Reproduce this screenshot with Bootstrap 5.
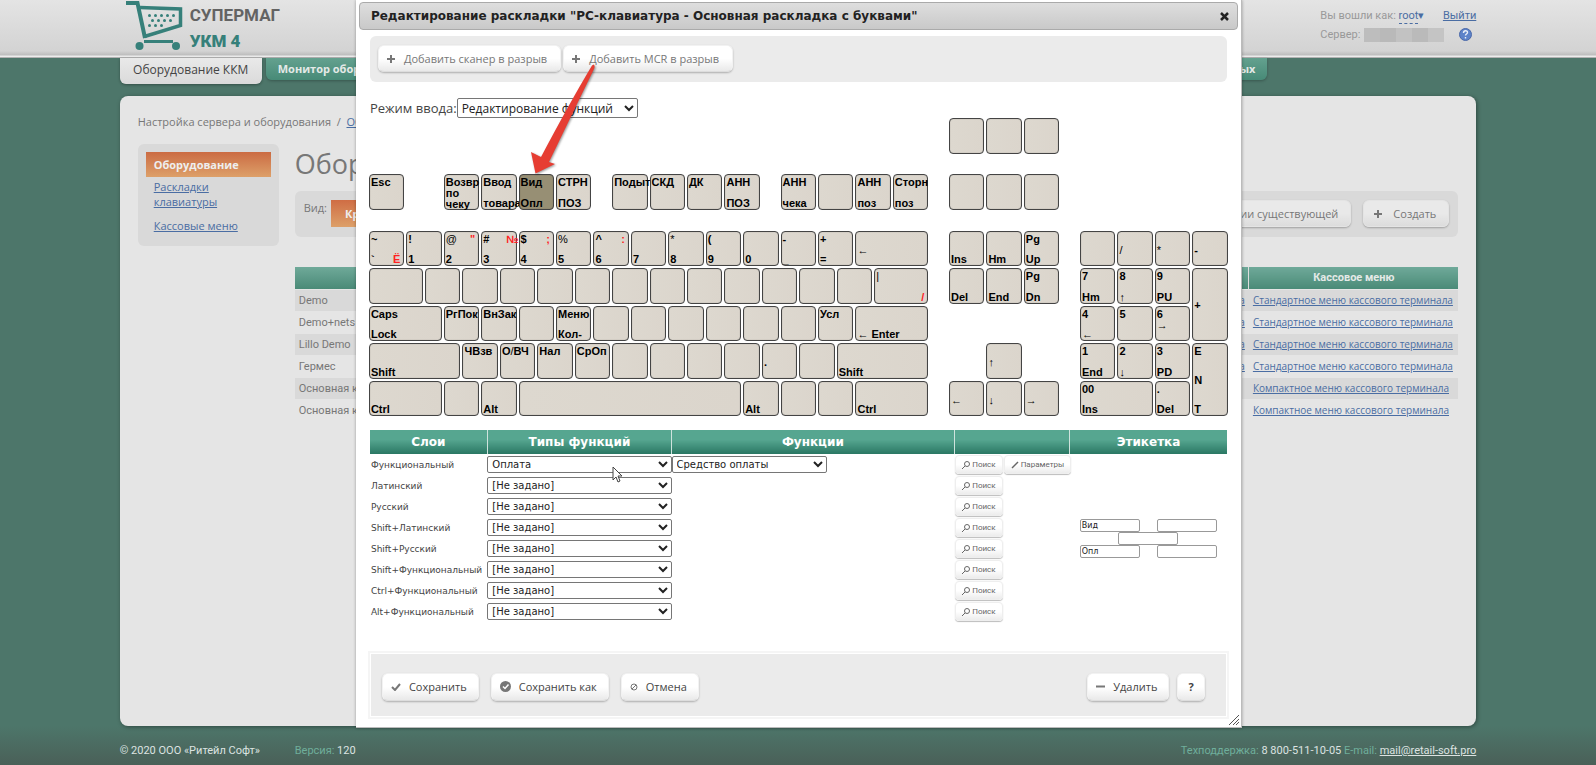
<!DOCTYPE html>
<html lang="ru">
<head>
<meta charset="utf-8">
<meta name="viewport" content="width=device-width, initial-scale=1">
<title>Супермаг УКМ 4</title>
<link href="https://cdn.jsdelivr.net/npm/bootstrap@5.3.0/dist/css/bootstrap.min.css" rel="stylesheet">
<script src="https://cdn.jsdelivr.net/npm/bootstrap@5.3.0/dist/js/bootstrap.bundle.min.js" defer></script>
<style>
  body { background: #4d766a; color: #777; font: 11px/16px "Open Sans", "Noto Sans", sans-serif; }
  a { color: #4a6da3; }
  .wrap { width: 85%; margin: 0 auto; }
  .topbar { height: 58px; background: linear-gradient(#e4e4e4, #d3d3d3 51px, #bdbdbd 55px, #ececec 56px, #ececec 57px, #777 58px); }
  .brand { color: #636363; font: bold 17px/26px Roboto, sans-serif; padding-top: 2px; }
  .brand b { display: block; color: #36807a; }
  .userbox { width: 156px; line-height: 19px; padding-top: 6px; color: #999; font-family: Roboto, sans-serif; }
  .userbox .user { text-decoration: none; border-bottom: 1px dashed #4a6da3; line-height: 14px; display: inline-block; }
  .masked { width: 80px; height: 14px; background: linear-gradient(90deg, #bdbdbd 20%, #b9b9b9 20% 40%, #c2c2c2 40% 60%, #bababa 60% 80%, #c4c4c4 80%); }
  .tab-on { width: 142px; height: 26px; line-height: 24px; font-size: 12px; color: #444; text-decoration: none; text-align: center; background: linear-gradient(#e9e9e9, #dadada); border-radius: 0 0 6px 6px; box-shadow: 0 1px 3px #0005; }
  .tab-off { height: 22px; line-height: 21px; padding: 0 12px; font-weight: bold; color: #e4e9e7; text-decoration: none; background: linear-gradient(#64a18f, #478a77); border-radius: 0 0 6px 6px; box-shadow: 0 1px 3px #0004; white-space: nowrap; }
  .tab-last { margin-left: auto; margin-right: 15.4%; }
  .sheet { background: #e5e5e5; border-radius: 8px; margin-top: 12px; padding: 18px 18px 16px; box-shadow: 1px 1px 4px #0006; }
  .sheet-row { margin-top: 14px; }
  .sidebox { width: 141px; height: 102px; background: #d9d9d9; border-radius: 6px; padding: 8px; }
  .sidebox a { display: block; padding-left: 8px; line-height: 15px; margin-bottom: 9px; }
  .sidebox .current { background: linear-gradient(#cb6b43, #dda069); color: #eee; font-weight: bold; line-height: 25px; text-decoration: none; margin-bottom: 2px; }
  h1 { font-size: 27px; line-height: 39px; margin: 0; color: #777; font-weight: 400; }
  .tools { height: 46px; background: #d9d9d9; border-radius: 6px; padding: 9px; }
  .choice { background: linear-gradient(#cf6d44, #dda069); color: #eee; font-weight: bold; border: 0; height: 27px; padding: 0 14px; }
  .softbtn { display: inline-flex; align-items: center; gap: 8px; height: 27px; padding: 0 11px 0 8px; border: 1px solid #f2f2f2; border-bottom-color: #ddd; border-radius: 6px; background: linear-gradient(#fff 50%, #e9e9e9); box-shadow: 0 1px 2px #0004; color: #777; font-size: 11px; white-space: nowrap; }
  .tools .softbtn { background: linear-gradient(#e9e9e9 50%, #dcdcdc); border-color: #e4e4e4; padding: 0 12px 0 10px; gap: 11px; }
  .listing { margin-top: 30px; width: 100%; table-layout: fixed; font-family: Roboto, sans-serif; }
  .listing th { height: 22px; background: linear-gradient(#6fa999, #4a8a77); color: #e4e9e7; text-align: center; padding: 0; }
  .listing th + th { width: 18%; border-left: 1px solid #ddd; }
  .listing td { height: 21px; padding: 0 4px; line-height: 21px; white-space: nowrap; border-top: 1px solid #e5e5e5; }
  .listing td:nth-child(2) { text-align: right; }
  .listing td a { font: 10px/21px "Open Sans", "Noto Sans", sans-serif; }
  .listing tr:nth-child(odd) td { background: #d9d9d9; }
  .foot { background: linear-gradient(#4d766a00, #4a6058); color: #dde3e1; font-family: Roboto, sans-serif; }
  .foot .wrap { padding: 17px 0 6px; }
  .foot .owner { width: 175px; }
  .foot span { color: #6fae9b; }
  .foot a { color: #dde3e1; }

  .dialog { left: 50%; top: 0; width: 55.5%; margin-left: -27.7%; background: #fff; border-right: 1px solid #bbb; border-bottom: 1px solid #bbb; padding: 2px 3px 8px; box-shadow: 0 0 3px #0005; font-family: "DejaVu Sans", sans-serif; }
  .dialog-title { height: 28px; padding: 0 8px 0 11px; border: 1px solid #aaa; border-radius: 4px; background: linear-gradient(#dedede, #c9c9c9); color: #222; font-size: 12px; font-weight: bold; }
  .dialog-body { padding: 6px 11px 0; }
  .strip { height: 46px; background: #ebebeb; border-radius: 6px; padding: 9px 8px; gap: 2px; }
  .strip .softbtn { padding: 0 13px 0 8px; gap: 9px; }
  .softbtn, .mode { font-family: "Open Sans", "Noto Sans", sans-serif; }
  .mode { margin-top: 16px; font-size: 13px; line-height: 20px; color: #444; }
  select { background: #fff; color: #222; border: 1px solid #767676; border-radius: 2px; }
  .mode select { height: 20px; width: 181px; padding: 0; font-size: 12px; line-height: 16px; }

  .keyboard { display: grid; grid-template-columns: repeat(46, minmax(0, 1fr)); grid-template-rows: repeat(16, minmax(0, 1fr)); height: 300px; margin: 0 -3px 12px -1px; }
  .keycap { display: grid; grid-template-rows: 11px 1fr 11px; align-items: center; position: relative; margin: 0 2px 2px 0; padding: 2px 0 0 1px; border: 1px solid #444; border-radius: 4px; background: linear-gradient(90deg, #ddd8cf, #dbd5cc); box-shadow: inset 0 0 1px #0006; color: #000; font: bold 11px/11px "Liberation Sans", Arial, sans-serif; text-align: left; white-space: nowrap; }
  .keycap.chosen { background: #978f74; }
  .keycap .thin { font-weight: normal; }
  .keycap .ru { position: absolute; right: 3px; color: #f22; }
  .keycap .ru-top { top: 2px; }
  .keycap .ru-wide { right: -3px; z-index: 1; }
  .keycap .ru-bottom { bottom: 0; }

  .layers { width: 100%; table-layout: fixed; font-size: 9px; line-height: 12px; color: #444; }
  .layers th { height: 24px; padding: 0; color: #fff; font-size: 12px; text-align: center; background: linear-gradient(#56a690 40%, #2a7763); }
  .layers th + th { border-left: 1px solid #cfe3dd; }
  .layers td { height: 21px; padding: 0; white-space: nowrap; vertical-align: middle; }
  .layers td:first-child { padding-left: 1px; }
  .layers select { width: 100%; height: 17px; font-size: 10px; font-family: inherit; padding: 0; display: block; }
  .layers .narrow { width: 155px; }
  .col-layer { width: 13.7%; } .col-type { width: 21.5%; } .col-func { width: 33%; } .col-act { width: 13.5%; }
  .minibtn { display: inline-flex; align-items: center; gap: 2px; height: 19px; padding: 0 6px; margin-left: 1px; border: 1px solid #eee; border-radius: 4px; background: linear-gradient(#fff 50%, #ececec); box-shadow: 0 1px 1px #0004; color: #666; font: 8px/10px Roboto, sans-serif; }
  .labels { width: 137px; margin: 0 auto; }
  .labels input { width: 60px; height: 13px; padding: 0 1px; font-size: 8px; border: 1px solid #999; border-radius: 2px; font-family: inherit; color: #222; display: block; }
  .bottom { margin: 29px -2px 0; height: 68px; border: 2px solid #f5f5f5; outline: 1px solid #fff; outline-offset: -3px; background: #ebebeb; padding: 3px 22px 0 12px; }
  .bottom .softbtn { height: 28px; color: #444; }
  .bottom .help { padding: 0 10px; }
  .pointer { left: 171px; top: 62px; z-index: 3; pointer-events: none; filter: drop-shadow(1px 1px 1px #0006); }
  .mouse { left: 125px; top: 12px; z-index: 2; }
  .grip { right: 2px; bottom: 2px; }
</style>
</head>
<body>
<div class="min-vh-100 d-flex flex-column">
  <header class="topbar">
    <div class="wrap d-flex">
      <svg class="ms-1" width="62" height="52" viewBox="124 0 62 52" fill="none" stroke="#36807a" aria-hidden="true">
        <path d="M126 3h11.500l7.500 35" stroke-width="4"/>
        <path d="M140 7.500l40.500 1.500v16.500l-36 11" stroke-width="3.500"/>
        <path d="M144 41.500h29" stroke-width="3"/>
        <g fill="#36807a" stroke="none"><circle cx="139.500" cy="46" r="4"/><circle cx="176" cy="46" r="4"/>
        <circle cx="149.500" cy="15.500" r="1.500"/><circle cx="155.500" cy="15.500" r="1.500"/><circle cx="161.500" cy="15.500" r="1.500"/><circle cx="167.500" cy="15.500" r="1.500"/><circle cx="173.500" cy="15.500" r="1.500"/>
        <circle cx="152.500" cy="20.500" r="1.500"/><circle cx="158.500" cy="20.500" r="1.500"/><circle cx="164.500" cy="20.500" r="1.500"/><circle cx="170.500" cy="20.500" r="1.500"/>
        <circle cx="149.500" cy="25.500" r="1.500"/><circle cx="155.500" cy="25.500" r="1.500"/><circle cx="161.500" cy="25.500" r="1.500"/></g>
      </svg>
      <div class="brand ms-1">СУПЕРМАГ<b>УКМ 4</b></div>
      <div class="userbox ms-auto">
        <div class="d-flex justify-content-between"><span>Вы вошли как: <a class="user" href="#">root</a><a href="#" class="text-decoration-none">▾</a></span><a href="#">Выйти</a></div>
        <div class="d-flex align-items-center">Сервер:<span class="masked ms-1"></span>
          <svg class="ms-auto me-1" width="13" height="13" viewBox="0 0 13 13"><circle cx="6.500" cy="6.500" r="6" fill="#5d83c9" stroke="#4a68a8"/><path d="M4.500 5c0-3 4-3 4-.500 0 1.500-2 1.500-2 3M6.500 9v1.500" fill="none" stroke="#e8eef8" stroke-width="1.400"/></svg></div>
      </div>
    </div>
  </header>
  <nav class="wrap d-flex align-items-start">
    <a class="tab-on" href="#">Оборудование ККМ</a>
    <a class="tab-off ms-1" href="#">Монитор оборудования</a>
    <a class="tab-off tab-last" href="#">данных</a>
  </nav>
  <main class="wrap sheet flex-grow-1">
    <div>Настройка сервера и оборудования &nbsp;/&nbsp; <a href="#">Оборудование</a></div>
    <div class="sheet-row d-flex">
      <div class="sidebox flex-shrink-0"><a class="current" href="#">Оборудование</a><a href="#">Раскладки клавиатуры</a><a href="#">Кассовые меню</a></div>
      <div class="flex-grow-1 ms-3">
        <h1>Оборудование</h1>
        <div class="tools d-flex mt-2">
          <span class="me-1">Вид:</span><button class="choice">Краткий</button>
          <button class="softbtn ms-auto me-2">на основании существующей</button>
          <button class="softbtn ms-1"><svg width="8" height="8"><path d="M4 0v8M0 4h8" stroke="#777" stroke-width="2"/></svg>Создать</button>
        </div>
        <table class="listing">
          <thead><tr><th></th><th></th><th>Кассовое меню</th></tr></thead>
          <tbody>
            <tr><td>Demo</td><td><a href="#">Раскладка</a></td><td><a href="#">Стандартное меню кассового терминала</a></td></tr>
            <tr><td>Demo+nets</td><td><a href="#">Раскладка</a></td><td><a href="#">Стандартное меню кассового терминала</a></td></tr>
            <tr><td>Lillo Demo</td><td><a href="#">Раскладка</a></td><td><a href="#">Стандартное меню кассового терминала</a></td></tr>
            <tr><td>Гермес</td><td><a href="#">Раскладка</a></td><td><a href="#">Стандартное меню кассового терминала</a></td></tr>
            <tr><td>Основная к</td><td></td><td><a href="#">Компактное меню кассового терминала</a></td></tr>
            <tr><td>Основная к</td><td></td><td><a href="#">Компактное меню кассового терминала</a></td></tr>
          </tbody>
        </table>
      </div>
    </div>
  </main>
  <footer class="foot">
    <div class="wrap d-flex">
      <div class="owner">© 2020 ООО «Ритейл Софт»</div><div><span>Версия:</span> 120</div>
      <div class="ms-auto"><span>Техподдержка:</span> 8 800-511-10-05 <span>E-mail:</span> <a href="#">mail@retail-soft.pro</a></div>
    </div>
  </footer>
</div>

<section class="dialog position-absolute" role="dialog" aria-labelledby="dlg">
  <div class="dialog-title d-flex align-items-center justify-content-between">
    <span id="dlg">Редактирование раскладки "PC-клавиатура - Основная раскладка с буквами"</span>
    <button class="border-0 bg-transparent p-0 d-flex" aria-label="Закрыть"><svg width="9" height="9"><path d="M1 1l7 7M8 1l-7 7" stroke="#222" stroke-width="2.500"/></svg></button>
  </div>
  <div class="dialog-body">
    <div class="strip d-flex">
      <button class="softbtn"><svg width="8" height="8"><path d="M4 0v8M0 4h8" stroke="#777" stroke-width="2"/></svg>Добавить сканер в разрыв</button>
      <button class="softbtn"><svg width="8" height="8"><path d="M4 0v8M0 4h8" stroke="#777" stroke-width="2"/></svg>Добавить MCR в разрыв</button>
    </div>
    <div class="mode d-flex"><label for="mode">Режим ввода:</label><select id="mode"><option>Редактирование функций</option></select></div>
    <div class="keyboard" id="keyboard"></div>
    <table class="layers">
      <colgroup><col class="col-layer"><col class="col-type"><col class="col-func"><col class="col-act"><col></colgroup>
      <thead><tr><th>Слои</th><th>Типы функций</th><th>Функции</th><th></th><th>Этикетка</th></tr></thead>
      <tbody id="layers"></tbody>
    </table>
    <div class="bottom d-flex align-items-center">
      <button class="softbtn me-2"><svg width="10" height="8"><path d="M1 4l3 3 5-6" fill="none" stroke="#777" stroke-width="2"/></svg>Сохранить</button>
      <button class="softbtn ms-1 me-2"><svg width="11" height="11"><circle cx="5.500" cy="5.500" r="5.500" fill="#777"/><path d="M3 5.500l2 2 3.500-4" fill="none" stroke="#fff" stroke-width="1.500"/></svg>Сохранить как</button>
      <button class="softbtn ms-1"><svg width="8" height="8"><circle cx="4" cy="4" r="3" fill="none" stroke="#777"/><path d="M2 6l4-4" stroke="#777"/></svg>Отмена</button>
      <button class="softbtn ms-auto me-2"><svg width="9" height="3"><path d="M0 1.500h9" stroke="#777" stroke-width="2"/></svg>Удалить</button>
      <button class="softbtn help"><b>?</b></button>
    </div>
  </div>
  <svg class="pointer position-absolute" width="72" height="114" viewBox="527 62 72 114" aria-hidden="true"><path d="M593.500 64.500Q595.500 65.500 594 69L549 162L555 164L535.500 173.500L531 152L541 157Q569 104 592 65.500Z" fill="#e63d32"/></svg>
  <svg class="grip position-absolute" width="10" height="10" stroke="#555" aria-hidden="true"><path d="M0 10L10 0M4 10l6-6M7 10l3-3"/></svg>
</section>

<script>
  // Each key: row and column in half-key steps, width, top, middle and bottom captions, then options.
  const keys = [
    [1,32,2],[1,34,2],[1,36,2],
    [4,1,2,'Esc'],[4,5,2,'Возвр','по','чеку'],[4,7,2,'Ввод','','товара'],[4,9,2,'Вид','','Опл',{chosen:1}],[4,11,2,'СТРН','','ПОЗ'],
    [4,14,2,'Подыт'],[4,16,2,'СКД'],[4,18,2,'ДК'],[4,20,2,'АНН','','ПОЗ'],[4,23,2,'АНН','','чека'],[4,25,2],[4,27,2,'АНН','','поз'],[4,29,2,'Сторн','','поз'],
    [4,32,2],[4,34,2],[4,36,2],
    [7,1,2,'~','','`',{bottom:'Ё'}],[7,3,2,'!','','1'],[7,5,2,'@','','2',{top:'"'}],[7,7,2,'#','','3',{top:'№'}],[7,9,2,'$','','4',{top:';'}],[7,11,2,'%','','5'],[7,13,2,'^','','6',{top:':'}],
    [7,15,2,'','','7'],[7,17,2,'*','','8'],[7,19,2,'(','','9'],[7,21,2,'','','0'],[7,23,2,'-','','_'],[7,25,2,'+','','='],[7,27,4,'','←'],
    [7,32,2,'','','Ins'],[7,34,2,'','','Hm'],[7,36,2,'Pg','','Up'],[7,39,2],[7,41,2,'','/'],[7,43,2,'','*'],[7,45,2,'','-'],
    [9,1,3],...[4,6,8,10,12,14,16,18,20,22,24,26].map(c => [9,c,2]),[9,28,3,'|','','',{bottom:'/'}],
    [9,32,2,'','','Del'],[9,34,2,'','','End'],[9,36,2,'Pg','','Dn'],[9,39,2,'7','','Hm'],[9,41,2,'8','','↑'],[9,43,2,'9','','PU'],[9,45,2,'','+','',{tall:1}],
    [11,1,4,'Caps','','Lock'],[11,5,2,'РгПок'],[11,7,2,'ВнЗак'],[11,9,2],[11,11,2,'Меню','','Кол-'],...[13,15,17,19,21,23].map(c => [11,c,2]),[11,25,2,'Усл'],[11,27,4,'','','← Enter'],
    [11,39,2,'4','','←'],[11,41,2,'5'],[11,43,2,'6','→'],
    [13,1,5,'','','Shift'],[13,6,2,'ЧВзв'],[13,8,2,'О/ВЧ'],[13,10,2,'Нал'],[13,12,2,'СрОп'],...[14,16,18,20].map(c => [13,c,2]),[13,22,2,'','.'],[13,24,2],[13,26,5,'','','Shift'],
    [13,34,2,'','↑'],[13,39,2,'1','','End'],[13,41,2,'2','','↓'],[13,43,2,'3','','PD'],[13,45,2,'E','N','T',{tall:1}],
    [15,1,4,'','','Ctrl'],[15,5,2],[15,7,2,'','','Alt'],[15,9,12],[15,21,2,'','','Alt'],[15,23,2],[15,25,2],[15,27,4,'','','Ctrl'],
    [15,32,2,'','←'],[15,34,2,'','↓'],[15,36,2,'','→'],[15,39,4,'00','','Ins'],[15,43,2,'.','','Del']
  ];
  const thin = text => text.replace(/[←↑→↓@%|*\/]/g, c => `<span class="thin">${c}</span>`);
  document.getElementById('keyboard').innerHTML = keys.map(([r, c, w, a = '', b = '', d = '', o = {}]) =>
    `<button class="keycap${o.chosen ? ' chosen' : ''}" style="grid-area:${r}/${c}/span ${o.tall ? 4 : 2}/span ${w}">` +
    `<span>${thin(a)}</span><span>${thin(b)}</span><span>${thin(d)}</span>` +
    (o.top ? `<span class="ru ru-top${o.top === '№' ? ' ru-wide' : ''}">${o.top}</span>` : '') + (o.bottom ? `<span class="ru ru-bottom">${o.bottom}</span>` : '') + '</button>').join('');

  const names = ['Функциональный', 'Латинский', 'Русский', 'Shift+Латинский', 'Shift+Русский', 'Shift+Функциональный', 'Ctrl+Функциональный', 'Alt+Функциональный'];
  const find = '<button class="minibtn"><svg width="8" height="8" fill="none" stroke="#666"><circle cx="5" cy="3" r="2.500"/><path d="M3 5L0 8"/></svg>Поиск</button>';
  const edit = '<button class="minibtn"><svg width="8" height="8"><path d="M1 7l6-6" stroke="#666" stroke-width="1.500"/></svg>Параметры</button>';
  const mouse = '<svg class="mouse position-absolute" width="12" height="18" viewBox="0 0 12 18"><path d="M1 1v13l3-3 2 5 2-1-2-5h4z" fill="#fff" stroke="#444"/></svg>';
  const box = (n, v = '') => `<input type="text" aria-label="Этикетка ${n}" value="${v}">`;
  const labels = `<td rowspan="8"><div class="labels"><div class="d-flex justify-content-between">${box(1, 'Вид')}${box(2)}</div><div class="d-flex justify-content-center">${box(3)}</div><div class="d-flex justify-content-between">${box(4, 'Опл')}${box(5)}</div></div></td>`;
  document.getElementById('layers').innerHTML = names.map((n, i) =>
    `<tr><td><label for="type${i}">${n}</label></td><td class="position-relative"><select id="type${i}"><option>${i ? '[Не задано]' : 'Оплата'}</option></select>${i ? '' : mouse}</td>` +
    `<td>${i ? '' : '<select class="narrow" aria-label="Функция"><option>Средство оплаты</option></select>'}</td><td>${find}${i ? '' : edit}</td>${i ? '' : labels}</tr>`).join('');
</script>
</body>
</html>
